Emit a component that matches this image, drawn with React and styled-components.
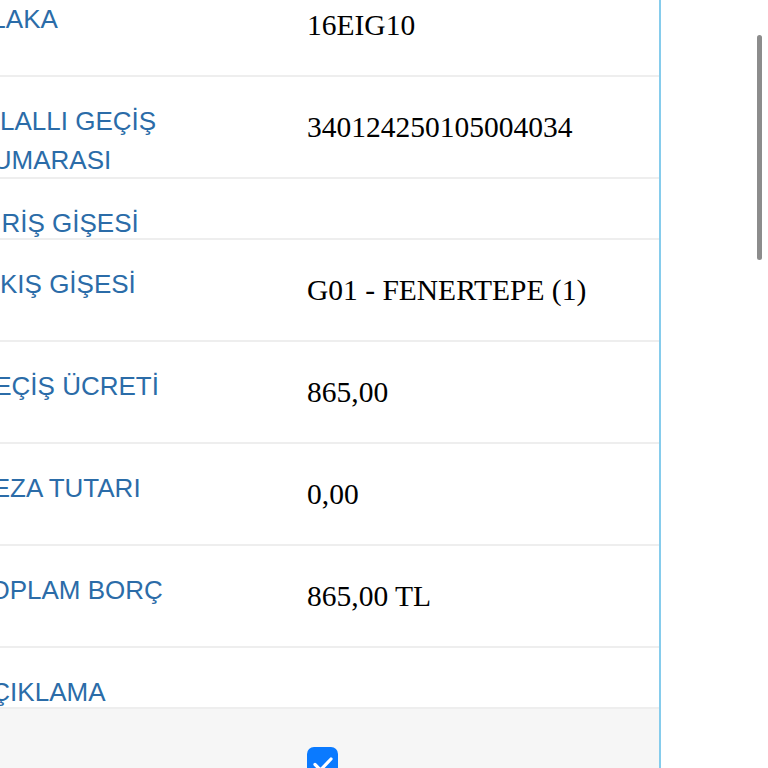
import React from 'react'
import styled, { createGlobalStyle } from 'styled-components'

// global----------------------------------

const GlobalStyle = createGlobalStyle`
  html, body {
    margin: 0;
    padding: 0;
    background: #fff;
    overflow: hidden;
  }
  body {
    font-family: "Liberation Sans", Arial, sans-serif;
  }
`

// styled----------------------------------

const _labelCol = 347

const Page = styled.div`
  width: 768px;
  height: 768px;
  overflow: hidden;
  position: relative;
  background: #fff;
`

// the detail panel is scrolled: its left part and first row start off screen
const Panel = styled.div`
  width: 700px;
  margin: -25px 0 0 -41px;
  border-right: 2px solid #86ccec;
  background: #fff;
`

const Row = styled.div`
  display: grid;
  grid-template-columns: ${_labelCol + 1}px 1fr;
  align-items: start;
  border-bottom: 2px solid #eeeeee;
  background: ${p => (p.$muted ? '#f6f6f6' : '#fff')};
  min-height: ${p => (p.$muted ? '120px' : '0')};
`

const Label = styled.div`
  padding: 25px 40px 0 15px;
  /* no trailing leading under the last line */
  margin-bottom: -5px;
  font-family: "Liberation Sans", Arial, sans-serif;
  font-size: 26px;
  line-height: 39px;
  color: #2b6ca8;
`

const Value = styled.div`
  padding: 29px 20px 28px 0;
  font-family: "Liberation Serif", "Times New Roman", serif;
  font-size: 29.5px;
  line-height: 43px;
  color: #000;
`

const CheckCell = styled.div`
  padding-top: 38px;
`

const CheckBox = styled.span`
  display: block;
  width: 31px;
  height: 31px;
  border-radius: 7px;
  background: #0a7aff;
`

const ScrollThumb = styled.div`
  position: fixed;
  top: 35px;
  left: 757px;
  width: 5px;
  height: 225px;
  border-radius: 3px;
  background: #8c8c8c;
`

// data------------------------------------

const rows = [
  { label: 'PLAKA', value: '16EIG10' },
  { label: 'IHLALLI GEÇİŞ NUMARASI', value: '340124250105004034' },
  { label: 'GİRİŞ GİŞESİ', value: '' },
  { label: 'ÇIKIŞ GİŞESİ', value: 'G01 - FENERTEPE (1)' },
  { label: 'GEÇİŞ ÜCRETİ', value: '865,00' },
  { label: 'CEZA TUTARI', value: '0,00' },
  { label: 'TOPLAM BORÇ', value: '865,00 TL' },
  { label: 'AÇIKLAMA', value: '' }
]

// component-------------------------------

const App = () => {
  return <Page>
    <GlobalStyle />
    <Panel>
      {rows.map(r => (
        <Row key={r.label}>
          <Label>{r.label}</Label>
          <Value>{r.value}</Value>
        </Row>
      ))}
      <Row $muted>
        <Label />
        <CheckCell>
          <CheckBox>
            <svg width='31' height='31' viewBox='0 0 31 31' fill='none'>
              <path
                d='M8 17.5 L13.5 23 L24 12'
                stroke='#fff'
                strokeWidth='3.2'
                strokeLinecap='round'
                strokeLinejoin='round'
              />
            </svg>
          </CheckBox>
        </CheckCell>
      </Row>
    </Panel>
    <ScrollThumb />
  </Page>
}

export default App
